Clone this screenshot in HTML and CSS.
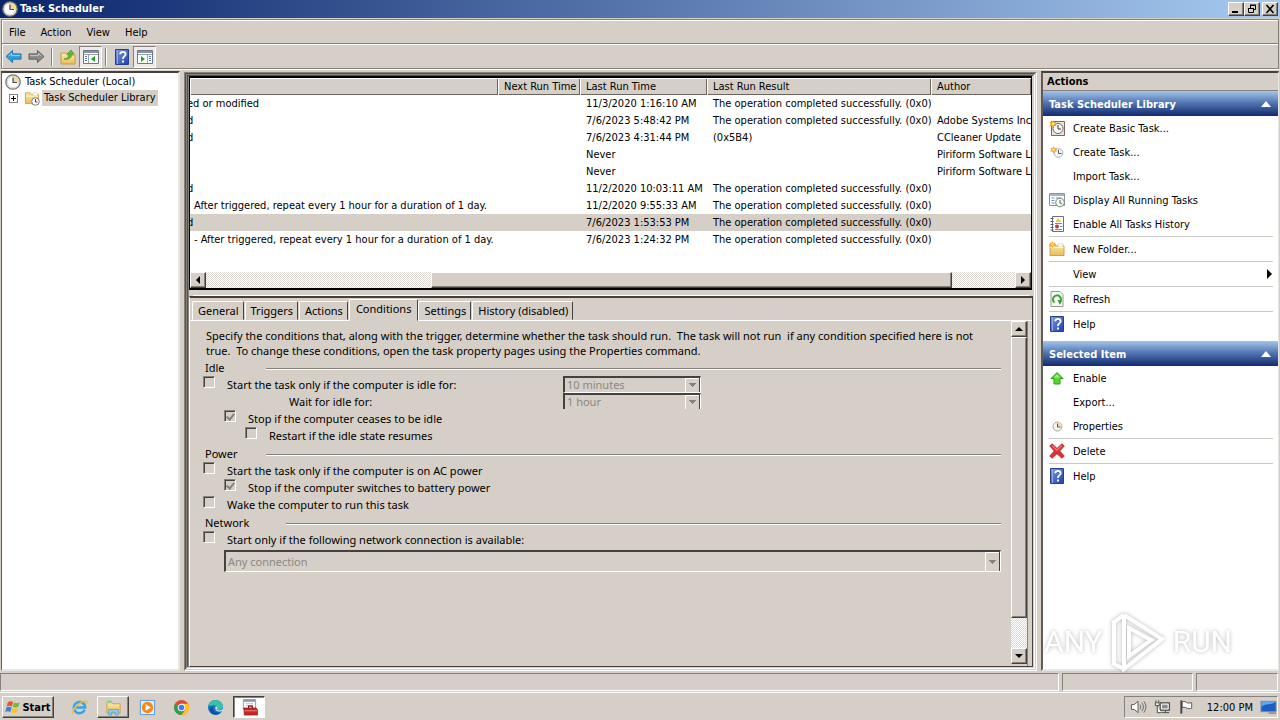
FILE: index.html
```html
<!DOCTYPE html>
<html lang="en">
<head>
<meta charset="utf-8">
<title>Task Scheduler</title>
<link rel="stylesheet" href="styles.css">
</head>
<body>
<svg class="defs" aria-hidden="true">
  <defs>
    <linearGradient id="blueG" x1="0" y1="0" x2="1" y2="1"><stop offset="0" stop-color="#7f9be0"/><stop offset="1" stop-color="#1c3fa8"/></linearGradient>
    <linearGradient id="foldG" x1="0" y1="0" x2="0" y2="1"><stop offset="0" stop-color="#fdebac"/><stop offset="1" stop-color="#e9bd55"/></linearGradient>
    <symbol id="i-clock" viewBox="0 0 16 16"><circle cx="8" cy="8" r="7.2" fill="#f4f3ee" stroke="#77756f" stroke-width="1.3"/><circle cx="8" cy="8" r="5.6" fill="#fff" stroke="#c9c7c0" stroke-width=".7"/><path d="M8 8V2.4A5.6 5.6 0 0 1 13.6 8z" fill="#f3d98c"/><path d="M8 3.5V8.5H12" fill="none" stroke="#444a66" stroke-width="1.2"/></symbol>
    <symbol id="i-folder" viewBox="0 0 16 16"><path d="M1 3h5l1.5 2H15v9.5H1z" fill="url(#foldG)" stroke="#c99b3c" stroke-width=".9"/><path d="M9 3h5v3H9z" fill="#fff" stroke="#c8b27a" stroke-width=".5"/><path d="M1.5 6.5h13" stroke="#fff4cf"/></symbol>
    <symbol id="i-star" viewBox="0 0 16 16"><path d="M4.5 0l1.2 2.8L8.8 2 7.3 4.6 9 7.2 6 6.6 4.5 9.4 3.2 6.6.2 7.4 1.8 4.7.4 2l2.9.7z" fill="#f2a51c"/><circle cx="4.6" cy="4.6" r="1.7" fill="#ffe27a"/></symbol>
    <symbol id="i-help" viewBox="0 0 16 16"><path d="M1.5.5h13v15h-13z" fill="url(#blueG)" stroke="#24418f"/><path d="M3.5 1v14" stroke="#8fa8e6" stroke-width="1"/><path d="M6.2 5.2C6.4 2 11.6 2 11.6 5.2 11.6 7.5 8.9 7.4 8.9 10" fill="none" stroke="#fff" stroke-width="1.8"/><path d="M8 11.5h2v2H8z" fill="#fff"/></symbol>
    <symbol id="i-panel" viewBox="0 0 16 16"><path d="M.5 1.5h15v13H.5z" fill="#fff" stroke="#6e7888"/><path d="M1 2h14v2H1z" fill="#8793a8"/><path d="M1 5.5h14M5.5 5.5V14" stroke="#98a0ae"/><path d="M2 7.5h2M2 9.5h2M2 11.5h2" stroke="#4f79b8"/><path d="M12 7v6L8 10z" fill="#2a9d2a"/></symbol>
    <symbol id="i-boxclock" viewBox="0 0 16 16"><path d="M2.5 1.5h13v14h-13z" fill="#e9e3da" stroke="#7c6a62"/><circle cx="9" cy="8.5" r="5" fill="#fff" stroke="#66666c"/><path d="M9 5v4h3" fill="none" stroke="#333"/><use href="#i-star" width="14" height="14"/></symbol>
    <symbol id="i-newtask" viewBox="0 0 16 16"><circle cx="9.500" cy="9" r="4.300" fill="#f5f4ee" stroke="#a8b0c0"/><path d="M9.500 6v3.500h3" fill="none" stroke="#4f5d80"/><use href="#i-star" x="1" y="2" width="13" height="13"/></symbol>
    <symbol id="i-running" viewBox="0 0 16 16"><path d="M.5 1.5h15v12H.5z" fill="#fff" stroke="#8a939f"/><path d="M1 2h14v2H1z" fill="#a9b3c2"/><path d="M2.5 6h3M2.5 8.500h3M2.500 11h3M7 6h5" stroke="#6b96ba"/><circle cx="11" cy="10.500" r="4.300" fill="#f8f8f5" stroke="#7b8577"/><path d="M11 8v3l2 1" fill="none" stroke="#45704a"/></symbol>
    <symbol id="i-history" viewBox="0 0 16 16"><path d="M3.500.5h11v15h-11z" fill="#fff" stroke="#6a6d86"/><path d="M1.500 2.500h3M1.500 5.500h3M1.500 8.500h3M1.500 11.500h3M1.500 14h3" stroke="#55577a"/><path d="M9 2l3.500 4h-6z" fill="#f4cc25"/><circle cx="8" cy="10.500" r="2" fill="#c33b32"/><path d="M6 7.500h7M11 10.500h2.500M6 13.500h7" stroke="#7482c4"/></symbol>
    <symbol id="i-refresh" viewBox="0 0 16 16"><path d="M2 .5h9l3 3v12H2z" fill="#f5fbf3" stroke="#8f9b90"/><path d="M5.500 11.500A4 4 0 1 1 11 11" fill="none" stroke="#3da435" stroke-width="2"/><path d="M8.500 8.700l4.200 1-1.800 4z" fill="#2d8f2a"/></symbol>
    <symbol id="i-enable" viewBox="0 0 16 16"><path d="M8 2.500l6 6h-3v5.500H5V8.500H2z" fill="#54d82f" stroke="#2d9c1d"/><path d="M8 4.500l3 3H5z" fill="#a8f58b"/></symbol>
    <symbol id="i-props" viewBox="0 0 16 16"><circle cx="8.500" cy="8.500" r="4.500" fill="#f7f4e7" stroke="#a0a4ad"/><path d="M8.500 8.500V4A4.500 4.500 0 0 1 13 8.500z" fill="#f3dda0"/><path d="M8.500 5.500v3.500h3" fill="none" stroke="#46507a"/></symbol>
    <symbol id="i-delete" viewBox="0 0 16 16"><path d="M3 .8l5 4.600L13 .8 15.300 3 10.700 8l4.600 5-2.300 2.300L8 10.700 3 15.300.8 13l4.500-5L.8 3z" fill="#df3337" stroke="#a91c20" stroke-width=".8"/><path d="M2.800 2.500L8 7.200l5-4.600" fill="none" stroke="#f79a93"/></symbol>
    <symbol id="i-arrow" viewBox="0 0 18 16"><path d="M1 8l7-6.500v3.700h9v5.600H8v3.700z"/><path d="M4 7.500l3-2.800V7h9" fill="none" stroke="#fff" stroke-opacity=".55"/></symbol>
  </defs>
</svg>

<header class="titlebar">
  <svg class="ico"><use href="#i-clock"/></svg>
  <h1 class="title">Task Scheduler</h1>
  <div class="winbtns">
    <button class="btn3d" aria-label="Minimize"><svg viewBox="0 0 12 10"><path d="M2 7h6v2H2z"/></svg></button>
    <button class="btn3d" aria-label="Restore"><svg viewBox="0 0 12 10"><path d="M4.500 4V1.500h5v4H8M4 1h6M2.500 4.500h5v4h-5zM2 4.500h6" fill="none" stroke="#000"/></svg></button>
    <button class="btn3d close" aria-label="Close"><svg viewBox="0 0 12 10"><path d="M2.500 1l7 8M9.500 1l-7 8" stroke="#000" stroke-width="1.600"/></svg></button>
  </div>
</header>

<div class="bars">
  <nav class="menubar" aria-label="Menu">
    <button>File</button><button>Action</button><button>View</button><button>Help</button>
  </nav>
  <div class="toolbar">
    <button aria-label="Back"><svg class="arrow back"><use href="#i-arrow"/></svg></button>
    <button aria-label="Forward"><svg class="arrow fwd"><use href="#i-arrow"/></svg></button>
    <span class="vsep"></span>
    <button aria-label="Up one level"><svg class="ico" viewBox="0 0 16 16"><path d="M1 4h5l1 2h8v9H1z" fill="url(#foldG)" stroke="#c99b3c"/><path d="M4 10c3 0 5-2 5-5H7l4-4 3 4h-2c0 4-4 6-8 5z" fill="#57c22c" stroke="#3c8d22" stroke-width=".6"/></svg></button>
    <button class="pressed" aria-label="Show console tree"><svg class="ico"><use href="#i-panel"/></svg></button>
    <span class="vsep"></span>
    <button aria-label="Help"><svg class="ico"><use href="#i-help"/></svg></button>
    <button class="pressed" aria-label="Show action pane"><svg class="ico flip"><use href="#i-panel"/></svg></button>
  </div>
</div>

<main class="main">
  <aside class="tree">
    <div class="node"><svg class="ico"><use href="#i-clock"/></svg><span>Task Scheduler (Local)</span></div>
    <div class="node child">
      <button class="expander" aria-label="Expand"></button>
      <svg class="ico" viewBox="0 0 16 16"><use href="#i-folder" width="16" height="15"/><circle cx="11.500" cy="11.500" r="3.800" fill="#fff" stroke="#777b86"/><path d="M11.500 9v3h2" fill="none" stroke="#445"/></svg>
      <span class="current">Task Scheduler Library</span>
    </div>
  </aside>

  <div class="frame outer"><div class="frame"><section class="center">
    <div class="list">
      <table class="tasks">
        <colgroup><col class="c-trig"><col class="c-next"><col class="c-last"><col class="c-res"><col></colgroup>
        <thead><tr><th></th><th>Next Run Time</th><th>Last Run Time</th><th>Last Run Result</th><th>Author</th></tr></thead>
        <tbody>
          <tr><td class="cut">ed or modified</td><td></td><td>11/3/2020 1:16:10 AM</td><td>The operation completed successfully. (0x0)</td><td></td></tr>
          <tr><td class="cut">d</td><td></td><td>7/6/2023 5:48:42 PM</td><td>The operation completed successfully. (0x0)</td><td>Adobe Systems Incorporated</td></tr>
          <tr><td class="cut">d</td><td></td><td>7/6/2023 4:31:44 PM</td><td>(0x5B4)</td><td>CCleaner Update</td></tr>
          <tr><td></td><td></td><td>Never</td><td></td><td>Piriform Software Ltd</td></tr>
          <tr><td></td><td></td><td>Never</td><td></td><td>Piriform Software Ltd</td></tr>
          <tr><td class="cut">d</td><td></td><td>11/2/2020 10:03:11 AM</td><td>The operation completed successfully. (0x0)</td><td></td></tr>
          <tr><td>After triggered, repeat every 1 hour for a duration of 1 day.</td><td></td><td>11/2/2020 9:55:33 AM</td><td>The operation completed successfully. (0x0)</td><td></td></tr>
          <tr class="sel"><td class="cut">d</td><td></td><td>7/6/2023 1:53:53 PM</td><td>The operation completed successfully. (0x0)</td><td></td></tr>
          <tr><td>- After triggered, repeat every 1 hour for a duration of 1 day.</td><td></td><td>7/6/2023 1:24:32 PM</td><td>The operation completed successfully. (0x0)</td><td></td></tr>
        </tbody>
      </table>
      <div class="hscroll">
        <button class="btn3d sq" aria-label="Scroll left"><svg viewBox="0 0 8 8"><path d="M6 0v8L2 4z"/></svg></button>
        <div class="track"><span class="before"></span><span class="thumb btn3d"></span><span class="after"></span></div>
        <button class="btn3d sq" aria-label="Scroll right"><svg viewBox="0 0 8 8"><path d="M2 0v8l4-4z"/></svg></button>
      </div>
    </div>

    <div class="detail">
      <div class="tabs" role="tablist">
        <button role="tab">General</button><button role="tab">Triggers</button><button role="tab">Actions</button><button role="tab" class="active" aria-selected="true">Conditions</button><button role="tab">Settings</button><button role="tab">History (disabled)</button>
      </div>
      <div class="page">
        <form class="form">
          <p class="intro">Specify the conditions that, along with the trigger, determine whether the task should run.&nbsp; The task will not run&nbsp; if any condition specified here is not true.&nbsp; To change these conditions, open the task property pages using the Properties command.</p>
          <h2 class="group"><span>Idle</span><i></i></h2>
          <div class="row"><input type="checkbox" id="idle"><label for="idle" class="wide">Start the task only if the computer is idle for:</label>
            <select disabled aria-label="Idle for"><option>10 minutes</option></select></div>
          <div class="row"><label for="wait" class="wide wait">Wait for idle for:</label>
            <select disabled id="wait" class="clipped"><option>1 hour</option></select></div>
          <div class="row in1"><input type="checkbox" id="stopidle" checked disabled><label for="stopidle">Stop if the computer ceases to be idle</label></div>
          <div class="row in2"><input type="checkbox" id="restart"><label for="restart">Restart if the idle state resumes</label></div>
          <h2 class="group"><span>Power</span><i></i></h2>
          <div class="row"><input type="checkbox" id="ac"><label for="ac">Start the task only if the computer is on AC power</label></div>
          <div class="row in1"><input type="checkbox" id="batt" checked disabled><label for="batt">Stop if the computer switches to battery power</label></div>
          <div class="row"><input type="checkbox" id="wake"><label for="wake">Wake the computer to run this task</label></div>
          <h2 class="group net"><span>Network</span><i></i></h2>
          <div class="row"><input type="checkbox" id="net"><label for="net">Start only if the following network connection is available:</label></div>
          <select disabled class="conn" aria-label="Network connection"><option>Any connection</option></select>
        </form>
        <div class="vscroll">
          <button class="btn3d sq" aria-label="Scroll up"><svg viewBox="0 0 8 8"><path d="M0 6h8L4 2z"/></svg></button>
          <span class="vthumb btn3d"></span><span class="vafter"></span>
          <button class="btn3d sq" aria-label="Scroll down"><svg viewBox="0 0 8 8"><path d="M0 2h8L4 6z"/></svg></button>
        </div>
      </div>
    </div>
  </section></div></div>

  <aside class="actions">
    <h2 class="ahead">Actions</h2>
    <h3 class="blue">Task Scheduler Library<svg viewBox="0 0 10 6"><path d="M0 6h10L5 0z"/></svg></h3>
    <ul>
      <li><button><svg class="ico"><use href="#i-boxclock"/></svg>Create Basic Task...</button></li>
      <li><button><svg class="ico"><use href="#i-newtask"/></svg>Create Task...</button></li>
      <li><button><span class="ico"></span>Import Task...</button></li>
      <li><button><svg class="ico"><use href="#i-running"/></svg>Display All Running Tasks</button></li>
      <li><button><svg class="ico"><use href="#i-history"/></svg>Enable All Tasks History</button></li>
      <li class="sep"><button><svg class="ico" viewBox="0 0 16 16"><use href="#i-folder" width="16" height="16"/><use href="#i-star" width="12" height="12"/></svg>New Folder...</button></li>
      <li class="sep"><button><span class="ico"></span>View<svg class="more" viewBox="0 0 6 10"><path d="M0 0v10l5-5z"/></svg></button></li>
      <li class="sep"><button><svg class="ico"><use href="#i-refresh"/></svg>Refresh</button></li>
      <li class="sep"><button><svg class="ico"><use href="#i-help"/></svg>Help</button></li>
    </ul>
    <h3 class="blue second">Selected Item<svg viewBox="0 0 10 6"><path d="M0 6h10L5 0z"/></svg></h3>
    <ul>
      <li><button><svg class="ico"><use href="#i-enable"/></svg>Enable</button></li>
      <li><button><span class="ico"></span>Export...</button></li>
      <li><button><svg class="ico"><use href="#i-props"/></svg>Properties</button></li>
      <li class="sep"><button><svg class="ico"><use href="#i-delete"/></svg>Delete</button></li>
      <li class="sep"><button><svg class="ico"><use href="#i-help"/></svg>Help</button></li>
    </ul>
  </aside>
</main>

<div class="status"><span></span><span></span><span></span></div>

<footer class="taskbar">
  <button class="btn3d start"><svg class="flag" viewBox="0 0 18 16"><path d="M3 3c2-1.500 4-1.500 5.500-.3L7.300 7.400C5.600 6.300 3.700 6.400 1.800 7.400z" fill="#e8552a"/><path d="M9.500 3.200c2 1 4 1 6-.2l-1.300 4.600c-2 1.200-4 1.100-5.900.2z" fill="#79b836"/><path d="M1.500 8.600c2-1 3.800-1 5.500.1l-1.300 4.600C4 12.300 2.200 12.400.3 13.400z" fill="#3b80d4"/><path d="M8 9.100c2 1 4 1 5.900-.1l-1.300 4.600c-2 1.100-4 1.100-5.900.2z" fill="#f6c42c"/></svg>Start</button>
  <button class="task" aria-label="Internet Explorer"><svg viewBox="0 0 18 18"><path d="M14.500 11.500A6 6 0 1 1 15 9H5" fill="none" stroke="#35a3e6" stroke-width="2.600"/><path d="M2 16C-1 12 12 .5 16.500 2.500c1 .6.500 2-.3 3.200" fill="none" stroke="#f1be3b" stroke-width="1.500"/></svg></button>
  <button class="task btn3d" aria-label="Explorer"><svg viewBox="0 0 18 18"><path d="M2 3h5l1 2h8v10H2z" fill="url(#foldG)" stroke="#cda547"/><path d="M3 1.500h4v3H3z" fill="#8fd08a"/><path d="M4 17v-6h10v6h-3v-3H7v3z" fill="#8fcdf2" stroke="#4e9ecc" stroke-width=".8"/></svg></button>
  <button class="task" aria-label="Media Player"><svg viewBox="0 0 18 18"><path d="M1.500 1.500h15v15h-15z" fill="#e1eefa" stroke="#559bd2"/><circle cx="9" cy="9" r="6" fill="#f28a1b"/><path d="M7 5.500v7L12.500 9z" fill="#fff"/></svg></button>
  <button class="task" aria-label="Chrome"><svg viewBox="0 0 18 18"><circle cx="9" cy="9" r="8" fill="#dd4a3a"/><path d="M9 9L2.100 5A8 8 0 0 0 9 17l3-5z" fill="#2fa24f"/><path d="M9 17a8 8 0 0 0 7-12H9l4 6z" fill="#fbc51c"/><circle cx="9" cy="9" r="4" fill="#fff"/><circle cx="9" cy="9" r="3" fill="#3f7fe8"/></svg></button>
  <button class="task" aria-label="Edge"><svg viewBox="0 0 18 18"><circle cx="9" cy="9" r="8" fill="#1873c9"/><path d="M1 8C2-1 16-1 17 8c0 4-5 4-7 3 2-3-1-5-4-4-2 0-4 0-5 1z" fill="#36c3a8"/><path d="M6.500 8C5 12 9 16 15 14c-4 4-11 3-12-2 0-2 1-4 3.500-4z" fill="#0e4f9e"/><path d="M9 8c3 0 2 2 1 3 2 2 6 1 7-1v2l-2 1c-4 1-7-1-6-5z" fill="#d4e6ea"/></svg></button>
  <button class="task on" aria-label="Task Scheduler"><svg viewBox="0 0 18 18"><path d="M2.500.5h13v10h-13z" fill="#fff" stroke="#8d97a6"/><path d="M3 1h12v2H3z" fill="#8a9ab5"/><path d="M5 5h8M5 7h8" stroke="#b3bccb"/><path d="M3 9.500h13l1.500 2V17h-14z" fill="#c5282b" stroke="#7f1417" stroke-width=".7"/><path d="M8 9.500V7.500h4v2" fill="none" stroke="#7f1417" stroke-width="1.200"/><path d="M3.500 12.500h13.500" stroke="#ee8a85"/></svg></button>
  <div class="tray">
    <svg viewBox="0 0 18 16"><path d="M1.500 5.500h3L8.500 2v12L4.500 10.500h-3z" fill="#fff" stroke="#555"/><path d="M10.500 5.500q2 2.500 0 5M12.500 3.500q3.500 4.500 0 9M14.700 2q4.500 6 0 12" fill="none" stroke="#666"/></svg>
    <svg viewBox="0 0 18 16"><path d="M6.500 3.500h10v8h-10z" fill="#999" stroke="#444"/><path d="M8 5h7v5H8z" fill="#8c8c8c" stroke="#fff"/><path d="M8 14h8M12 12v2" stroke="#444"/><path d="M2 1v2M5 1v2M1.500 3.500h4v3h-4zM3.500 7v7h4" fill="#fff" stroke="#444"/></svg>
    <svg viewBox="0 0 18 16"><path d="M3.500 1v14" stroke="#444" stroke-width="2"/><path d="M4.500 2.500c3-1 4 .5 5 1s3 .500 5-.2v6c-2 .7-4 .6-5 0s-2-1.500-5-.6z" fill="#fff" stroke="#555"/></svg>
    <time>12:00 PM</time>
    <svg viewBox="0 0 18 16"><path d="M1 2h16v11H1z" fill="#1c5fc0" stroke="#7c93b5"/><path d="M1.500 8C6 3 11 7 16.500 2.500H1.500z" fill="#61a7ee"/><path d="M9 14.500h8" stroke="#666"/></svg>
  </div>
</footer>

<div class="mark" aria-hidden="true"><span>ANY</span><svg viewBox="0 0 54 60"><path d="M13 3L51 27 13 57 13 3M13 3L3 10V52L13 57M18 16l22 12-22 16z" fill="none" stroke="#fff" stroke-width="4"/></svg><span>RUN</span></div>
</body>
</html>
```
FILE: styles.css
```css
:root {
  --face: #d5cfc7;
  --mid: #87817b;
  --dark: #45413e;
  --ui: "DejaVu Sans Condensed", "DejaVu Sans", sans-serif;
  --form: "Noto Sans", sans-serif;
}
* { box-sizing: border-box; }
body {
  margin: 0;
  height: 100vh;
  display: flex;
  flex-direction: column;
  background: var(--face);
  font: 11px/17px var(--ui);
  color: #000;
  overflow: hidden;
}
h1, h2, h3, p, ul { margin: 0; padding: 0; font-size: 11px; }
ul { list-style: none; }
button { margin: 0; padding: 0; border: 0; background: none; font: inherit; color: inherit; }
.defs { position: absolute; width: 0; height: 0; }
.ico { width: 16px; height: 16px; flex: none; }
.btn3d {
  background: var(--face);
  border: 1px solid;
  border-color: #fff var(--dark) var(--dark) #fff;
  box-shadow: inset -1px -1px 0 var(--mid);
  display: flex;
  align-items: center;
  justify-content: center;
}

.titlebar {
  height: 18px;
  flex: none;
  display: flex;
  align-items: center;
  gap: 2px;
  padding: 0 2px;
  background: linear-gradient(to right, #0a246a, #a6caf0);
}
.title { color: #fff; flex: 1; line-height: 18px; }
.winbtns { display: flex; }
.winbtns button { width: 16px; height: 14px; }
.winbtns svg { width: 12px; height: 10px; }
.winbtns .close { margin-left: 2px; }

.bars {
  flex: none;
  margin: 1px 1px 0;
  border: 1px solid var(--mid);
  box-shadow: inset 1px 1px 0 #fff, 0 1px 0 #fff;
}
.menubar { height: 24px; display: flex; align-items: center; padding: 2px 0 0 7px; gap: 15px; border-bottom: 1px solid var(--mid); }
.toolbar { height: 24px; display: flex; align-items: center; border-top: 1px solid #fff; }
.toolbar button { width: 23px; height: 22px; display: flex; align-items: center; justify-content: center; }
.toolbar .pressed { background: #eeebe6; border: 1px solid; border-color: var(--mid) #fff #fff var(--mid); }
.vsep { width: 2px; height: 18px; margin: 0 3px; border-left: 1px solid var(--mid); border-right: 1px solid #fff; }
.arrow { width: 17px; height: 15px; }
.back { fill: #2d9fe0; stroke: #2270a6; }
.fwd { fill: #8b8b8b; stroke: #5d5d5d; }
.fwd, .flip { transform: scaleX(-1); }

.main { flex: 1; min-height: 0; margin-top: 2px; display: grid; grid-template-columns: 180px minmax(0, 1fr) 238px; column-gap: 4px; padding-right: 1px; }
.tree, .actions { background: #fff; border: 2px solid; border-color: var(--dark) #e9e6e1 #e9e6e1 #5f5b56; }
.actions { border-right-width: 1px; }
.tree { border-left-width: 1px; margin-left: 1px; padding-top: 1px; }
.node { display: flex; align-items: center; height: 16px; padding-left: 3px; gap: 4px; white-space: nowrap; }
.node span { line-height: 16px; }
.child { padding-left: 7px; }
.child .ico { margin-left: 2px; }
.current { background: var(--face); padding: 0 2px; margin-left: -2px; }
.expander { width: 9px; height: 9px; border: 1px solid var(--mid); background: linear-gradient(#000, #000) center / 5px 1px no-repeat, linear-gradient(#000, #000) center / 1px 5px no-repeat; }

.frame { border: 1px solid; border-color: var(--mid) #fff #fff var(--mid); padding: 1px; background: #55514d; display: grid; min-width: 0; min-height: 0; box-shadow: inset -1px -1px 0 var(--face); }
.outer { margin-top: 1px; }
.center { display: flex; flex-direction: column; min-width: 0; min-height: 0; background: var(--face); border-left: 1px solid var(--mid); }
.list { border: 2px solid #000; border-right-width: 1px; border-left-width: 1px; background: #fff; height: 214px; flex: none; display: flex; flex-direction: column; margin-right: 1px; }
.tasks { border-collapse: collapse; table-layout: fixed; width: 100%; }
.c-trig { width: 308px; }
.c-next { width: 82px; }
.c-last { width: 127px; }
.c-res { width: 224px; }
.tasks th, .tasks td { height: 17px; padding: 0 0 0 6px; text-align: left; font-weight: normal; white-space: nowrap; overflow: hidden; line-height: 17px; }
.tasks th { background: var(--face); box-shadow: inset 1px 1px 0 #fff, inset -1px -1px 0 #6a655f; }
.tasks td:first-child { padding-left: 4px; }
.tasks td.cut { padding-left: 0; text-indent: -3px; }
.sel { background: var(--face); }
.hscroll { margin-top: auto; height: 16px; display: flex; }
.sq { width: 16px; height: 16px; flex: none; }
.sq svg { width: 8px; height: 8px; }
.track { flex: 1; display: flex; }
.before, .after, .vafter { background: repeating-conic-gradient(#fff 0 25%, #ddd9d2 0 50%) 0 0 / 2px 2px; }
.track .before { flex: 226; }
.track .thumb { flex: 521; }
.track .after { flex: 63; }

.detail { flex: 1; min-height: 0; margin-top: 6px; border: 1px solid; border-color: var(--dark); border-left-color: #fff; border-width: 2px 1px 1px; display: flex; flex-direction: column; box-shadow: 0 -5px 0 -4px #fff; }
.tabs { display: flex; align-items: flex-end; height: 23px; padding-left: 2px; border-bottom: 1px solid #fff; }
.tabs button { font: 11px/17px var(--form); height: 19px; border: 1px solid; border-color: #fff var(--dark) transparent #fff; border-radius: 2px 2px 0 0; padding: 0 4px 0 5px; margin-right: 1px; white-space: nowrap; }
.tabs .active { height: 22px; margin: 0 0 -1px; background: var(--face); border-bottom-color: var(--face); padding: 0 6px 3px; }
.page { flex: 1; min-height: 0; display: flex; margin-right: 4px; padding-bottom: 2px; border-right: 1px solid var(--mid); }
.form { flex: 1; min-width: 0; padding: 7px 10px 0 13px; font: 11px/17px var(--form); }
.intro { line-height: 15px; padding: 0 10px 0 3px; margin-bottom: 1px; }
.group { height: 17px; display: flex; align-items: center; font-weight: normal; padding-left: 2px; margin-top: 1px; }
.group span { width: 61px; }
.net span { width: 81px; }
.group i { flex: 1; height: 2px; margin-top: 2px; border-top: 1px solid var(--mid); border-bottom: 1px solid #fff; }
.row { height: 17px; display: flex; align-items: flex-start; }
.row label { padding-left: 12px; }
.row .wide { width: 348px; }
.row .wait { width: 360px; padding-left: 86px; }
.in1 { padding-left: 21px; }
.in2 { padding-left: 42px; }
input[type="checkbox"] { appearance: none; margin: 0; width: 12px; height: 12px; flex: none; border: 1px solid; border-color: var(--mid) #fff #fff var(--mid); box-shadow: inset 1px 1px 0 var(--dark); position: relative; }
input:checked::after { content: ""; position: absolute; left: 3px; top: 1px; width: 3px; height: 6px; border: solid var(--mid); border-width: 0 2px 2px 0; transform: rotate(40deg); }
select {
  appearance: none; margin: 0; width: 138px; height: 17px; border-radius: 0; padding: 0 2px; font: inherit; line-height: 14px;
  border: 2px solid; border-color: var(--dark) #fff #fff var(--dark); border-bottom-width: 1px; border-right-width: 1px;
  background:
    conic-gradient(from 315deg at 50% 100%, var(--mid) 90deg, transparent 0) right 4px center / 7px 4px no-repeat,
    linear-gradient(#fff, #fff) right 14px top / 1px 100% no-repeat,
    linear-gradient(#fff, #fff) right 1px top / 14px 1px no-repeat,
    linear-gradient(var(--dark), var(--dark)) right 0 top / 1px 100% no-repeat,
    var(--face);
}
select:disabled { color: #8b8781; opacity: 1; }
select.clipped { height: 16px; border-bottom: 0; }
select.conn { display: block; width: calc(100% - 21px); height: 22px; margin: 2px 0 0 21px; line-height: 18px; }
.vscroll { width: 16px; flex: none; display: flex; flex-direction: column; }
.vscroll .vthumb { flex: 278; }
.vscroll .vafter { flex: 30; }

.ahead { height: 18px; padding-left: 4px; background: var(--face); border-bottom: 1px solid var(--mid); line-height: 18px; }
.blue { height: 25px; display: flex; align-items: center; justify-content: space-between; padding: 1px 7px 0 6px; color: #fff; background: linear-gradient(#a3c5ec, #5579b4 45%, #12296f); }
.blue svg { width: 10px; height: 6px; fill: #fff; }
.second { margin-top: 5px; }
.actions li { margin: 0 5px 0 6px; }
.actions .sep { border-top: 1px solid #cbc8c3; }
.actions button { width: 100%; height: 24px; display: flex; align-items: center; gap: 8px; text-align: left; }
.more { width: 6px; height: 10px; margin-left: auto; }

.status { flex: none; height: 22px; padding: 2px 2px 1px 0; display: flex; gap: 3px; border-bottom: 1px solid #fff; }
.status span { border: 1px solid; border-color: var(--mid) #fff #fff var(--mid); width: 82px; }
.status span:first-child { flex: 1; }
.status span:nth-child(2) { width: 131px; }

.taskbar { flex: none; height: 27px; display: flex; align-items: center; padding: 1px 2px 0; gap: 2px; }
.start { width: 52px; height: 22px; font-weight: bold; }
.flag { width: 17px; height: 16px; }
.task { width: 32px; height: 22px; display: flex; align-items: center; justify-content: center; }
.task svg { width: 17px; height: 17px; }
.start + .task { margin-left: 7px; }
.on { background: #fff; border: 1px solid; border-color: var(--dark) #fff #fff var(--dark); box-shadow: inset 1px 1px 0 var(--mid); }
.tray { margin-left: auto; height: 22px; display: flex; align-items: center; gap: 7px; padding-left: 5px; border: 1px solid; border-color: var(--mid) #fff #fff var(--mid); }
.tray svg { width: 17px; height: 16px; }
.tray time { padding-left: 5px; }

.mark { position: absolute; right: 48px; bottom: 48px; display: flex; align-items: center; gap: 8px; color: #fff; font: 30px/60px Roboto, sans-serif; opacity: .7; filter: drop-shadow(0 0 2px #999); pointer-events: none; }
.mark svg { width: 54px; height: 60px; }
```
